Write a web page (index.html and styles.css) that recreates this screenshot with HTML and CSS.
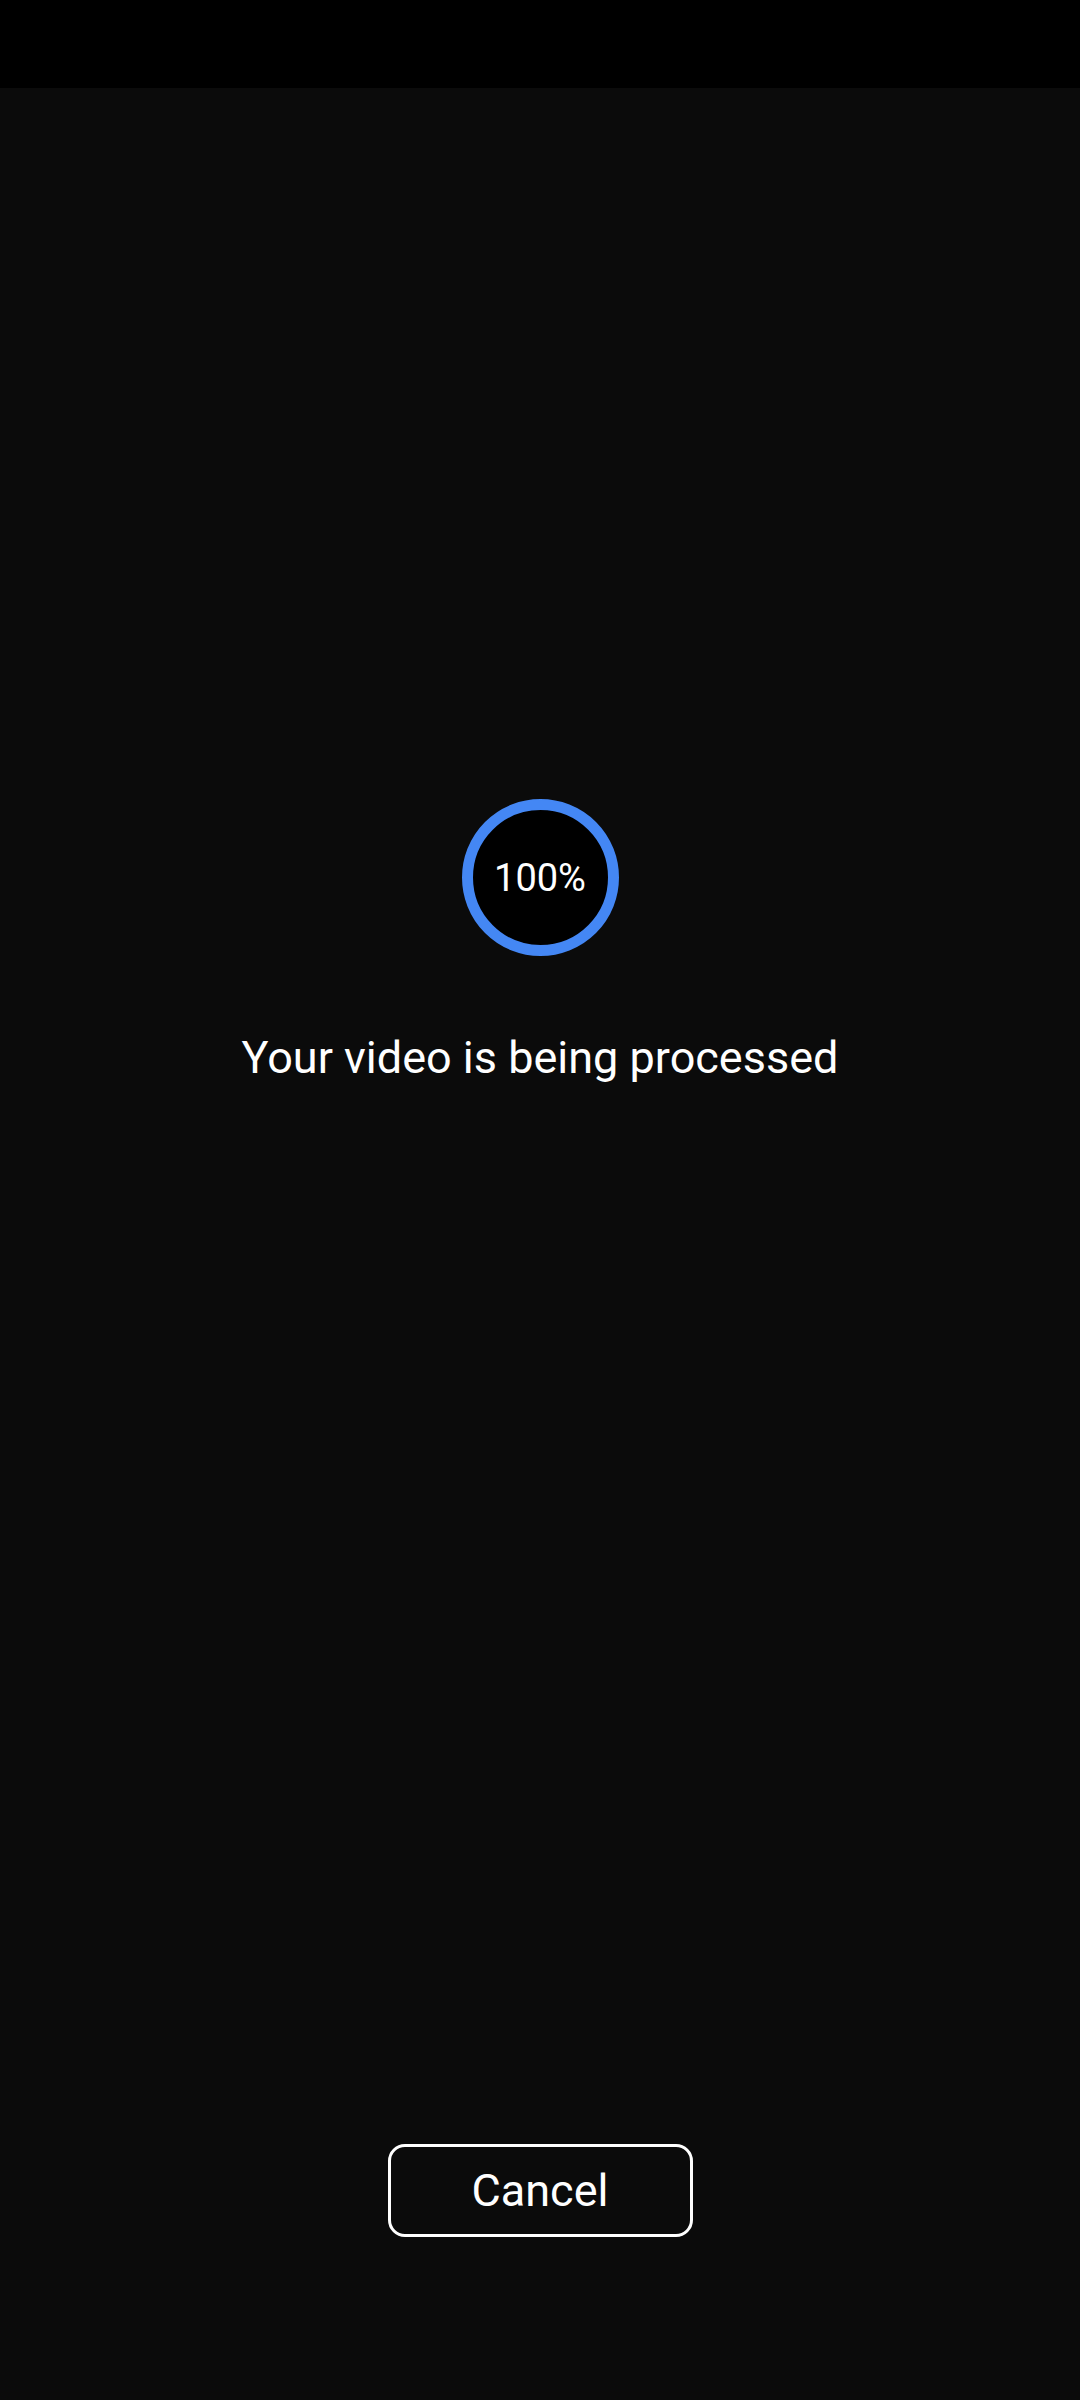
FILE: index.html
```html
<!DOCTYPE html>
<html>
<head>
<meta charset="utf-8">
<link rel="stylesheet" href="styles.css">
</head>
<body>
<div class="status-bar"></div>
<main class="screen">
  <div class="progress">
    <span class="progress-label">100%</span>
  </div>
  <p class="message">Your video is being processed</p>
  <button class="cancel">Cancel</button>
</main>
</body>
</html>
```
FILE: styles.css
```css
* { box-sizing: border-box; }
html, body {
  margin: 0;
  padding: 0;
  width: 1080px;
  height: 2400px;
  background: #0b0b0b;
  font-family: Roboto, "Noto Sans", sans-serif;
  color: #ffffff;
  overflow: hidden;
}
.status-bar {
  height: 88px;
  background: #000000;
}
.screen {
  height: 2312px;
  display: flex;
  flex-direction: column;
  align-items: center;
  padding-top: 711px;
  padding-bottom: 163px;
}
.progress {
  width: 157px;
  height: 157px;
  border-radius: 50%;
  border: 11px solid #4487f4;
  background: #000000;
  display: flex;
  align-items: center;
  justify-content: center;
}
.progress-label {
  font-size: 38px;
  line-height: 1;
  color: #ffffff;
}
.message {
  margin: 75px 0 0;
  font-size: 45px;
  line-height: normal;
}
.cancel {
  margin-top: auto;
  width: 305px;
  height: 93px;
  border: 3px solid #ffffff;
  border-radius: 17px;
  background: #0b0b0b;
  color: #ffffff;
  font-family: Roboto, "Noto Sans", sans-serif;
  font-size: 45px;
  display: flex;
  align-items: center;
  justify-content: center;
  padding: 0;
}
```
